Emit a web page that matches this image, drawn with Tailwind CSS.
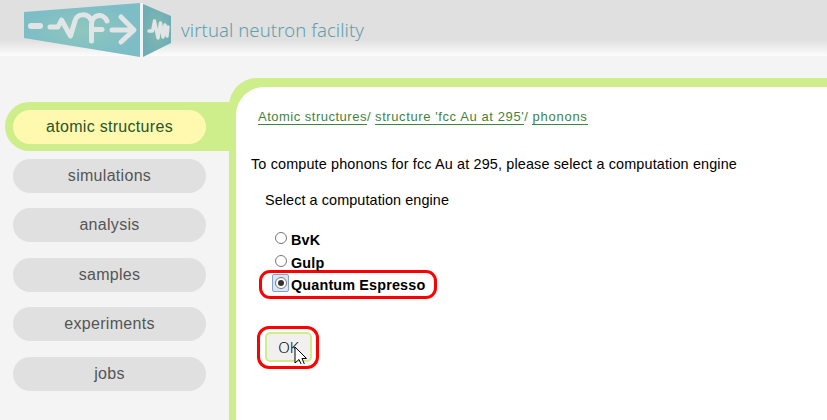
<!DOCTYPE html>
<html lang="en">
<head>
<meta charset="utf-8">
<title>virtual neutron facility</title>
<script src="https://cdn.jsdelivr.net/npm/@tailwindcss/browser@4"></script>
</head>
<body class="w-[827px] h-[420px] overflow-hidden bg-[#f4f4f4] font-['Liberation_Sans',Arial,sans-serif] text-black flex flex-col">
<header class="h-14 shrink-0 flex bg-[linear-gradient(to_bottom,#e0e0e0_0,#e0e0e0_40px,#f9f9f9_54px,#fbfbfb_56px)]">
  <svg class="ml-6 w-[148px] h-[58px] shrink-0" viewBox="24 0 148 58" fill="none">
    <defs>
      <radialGradient id="front"><stop offset="0" stop-color="#8fc7bd"/><stop offset="1" stop-color="#7dbdc6"/></radialGradient>
      <radialGradient id="side"><stop offset="0" stop-color="#83b8ad"/><stop offset="1" stop-color="#70aeb6"/></radialGradient>
    </defs>
    <path d="M24 12L140 3V57L24 38Z" fill="url(#front)"/>
    <path d="M143 4L171 16V43L143 57Z" fill="url(#side)"/>
    <path d="M140 3H143V57H140Z" fill="#f1f4f4"/>
    <g stroke="#e1e5e5" stroke-linecap="round" stroke-linejoin="round">
      <path d="M31 26H40" stroke-width="6"/>
      <path d="M50 27H58L61.500 20L70.500 36L75 21C77 13 88 13 91 20M91.500 41V24C91.500 15 103 12 107 21M92 29.500H102" stroke-width="5"/>
      <path d="M112 30H133M121 17L134 30L121 42" stroke-width="5"/>
      <path d="M149 31H152.500L154.500 21L158 38L160.500 23L163 37L165 25L167 36L168 27" stroke-width="3.400"/>
    </g>
  </svg>
  <div class="mt-[17px] ml-[9px] text-[18.500px] leading-[26px] tracking-[0.080px] font-light font-['Noto_Sans','Open_Sans',sans-serif] text-[#5f9fab] whitespace-nowrap">virtual neutron facility</div>
</header>
<div class="flex flex-1 min-h-0">
  <nav class="w-[229px] shrink-0 pt-[46px] text-center text-[16px] leading-[33px] tracking-[0.3px] text-[#555]">
    <div class="ml-[5px] h-[49px] rounded-l-full bg-[#cdee8b] p-2"><div class="w-[193px] h-[34px] rounded-full bg-[#fff8af] text-[#2a542a]">atomic structures</div></div>
    <div class="ml-[13px] mt-2 w-[193px] flex flex-col gap-[15.4px]">
      <div class="h-[34px] rounded-full bg-[#e0e0e0]">simulations</div>
      <div class="h-[34px] rounded-full bg-[#e0e0e0]">analysis</div>
      <div class="h-[34px] rounded-full bg-[#e0e0e0]">samples</div>
      <div class="h-[34px] rounded-full bg-[#e0e0e0]">experiments</div>
      <div class="h-[34px] rounded-full bg-[#e0e0e0]">jobs</div>
    </div>
  </nav>
  <div class="flex-1 pt-[22px] flex">
    <main class="flex-1 rounded-tl-[28px] bg-[#cdee8b] pt-[9px] pl-[7px] flex">
      <div class="flex-1 rounded-tl-[28px] bg-white whitespace-nowrap text-[14.400px] tracking-[0.09px] leading-5">
        <div class="ml-[22px] mt-[22px] h-4 flex gap-1 text-[13px] leading-4 tracking-[0.5px] text-[#418341]">
          <div class="flex"><a class="h-4 border-b border-[#418341]">Atomic structures</a>/</div>
          <div class="flex"><a class="h-4 border-b border-[#418341] tracking-[0.600px]">structure 'fcc Au at 295'</a>/</div>
          <a class="h-4 border-b border-[#418341] tracking-[0.750px]">phonons</a>
        </div>
        <p class="ml-[15px] mt-[29px] tracking-[0.150px]">To compute phonons for fcc Au at 295, please select a computation engine</p>
        <p class="ml-[29px] mt-4">Select a computation engine</p>
        <div class="ml-[23px] mt-[19px] w-[178px] font-bold tracking-[0.15px]">
          <label class="flex h-[22px] pl-4"><i class="mt-[3px] mr-1 w-3 h-3 rounded-full border border-[#777] bg-white"></i><span class="pt-px">BvK</span></label>
          <label class="flex h-[22px] pl-4"><i class="mt-1 mr-1 w-3 h-3 rounded-full border border-[#777] bg-white"></i><span class="pt-0.5">Gulp</span></label>
          <label class="flex h-[29px] mt-[-3px] border-[3px] border-[#ff0000] rounded-[11px] pl-2.5">
            <i class="mt-px mr-[2px] w-[17px] h-[18px] rounded-[2px] border border-[#83a2cf] bg-[#dce6f2] flex items-center justify-center"><b class="w-3 h-3 rounded-full border border-[#777] bg-white flex items-center justify-center"><b class="w-1.5 h-1.5 rounded-full bg-[#333]"></b></b></i><span class="pt-0.5">Quantum Espresso</span>
          </label>
        </div>
        <div class="ml-[21px] mt-[27px] w-[62px] h-[43px] rounded-[12px] border-[3px] border-[#ff0000] pt-[3px] pl-[5px] relative">
          <button class="block w-[47px] h-[30px] rounded-[5px] border-2 border-[#cdee8b] bg-[#f1f0ef] text-[15px] leading-[26px] tracking-normal font-['Noto_Sans',sans-serif] font-light text-black">OK</button>
          <svg class="absolute left-[34px] top-[17px] w-3.5 h-[18px]" viewBox="0 0 14 18"><path d="M1 1V17L5 13.500L8.500 21L11 19.500L8 12.500H12.500Z" fill="white" stroke="black"/></svg>
        </div>
      </div>
    </main>
  </div>
</div>
</body>
</html>
